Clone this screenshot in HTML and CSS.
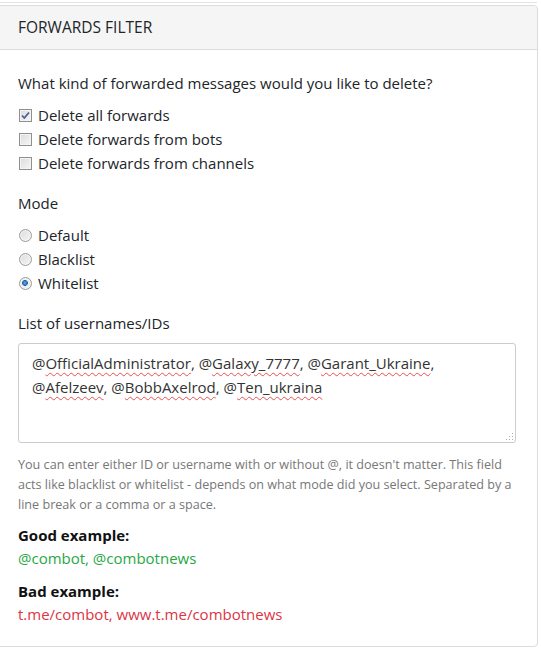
FILE: index.html
```html
<!DOCTYPE html>
<html lang="en">
<head>
  <meta charset="UTF-8" />
  <title>Forwards filter</title>
  <link rel="stylesheet" href="styles.css">
</head>
<body>
  <div class="prev-card"></div>

  <div class="card">
    <div class="card-header">Forwards filter</div>
    <div class="card-body">

      <div class="group">
        <p class="label">What kind of forwarded messages would you like to delete?</p>
        <label class="check"><input type="checkbox" checked> Delete all forwards</label>
        <label class="check"><input type="checkbox"> Delete forwards from bots</label>
        <label class="check"><input type="checkbox"> Delete forwards from channels</label>
      </div>

      <div class="group">
        <p class="label">Mode</p>
        <label class="check"><input type="radio" name="mode"> Default</label>
        <label class="check"><input type="radio" name="mode"> Blacklist</label>
        <label class="check"><input type="radio" name="mode" checked> Whitelist</label>
      </div>

      <div class="group group-list">
        <p class="label">List of usernames/IDs</p>
        <div class="textarea">@<span class="typo">OfficialAdministrator</span>, @<span class="typo">Galaxy_7777</span>, @<span class="typo">Garant_Ukraine</span>, @<span class="typo">Afelzeev</span>, @<span class="typo">BobbAxelrod</span>, @<span class="typo">Ten_ukraina</span><span class="grip"></span></div>
        <p class="help">You can enter either ID or username with or without @, it doesn't matter. This field acts like blacklist or whitelist - depends on what mode did you select. Separated by a line break or a comma or a space.</p>
      </div>

      <div class="example">
        <b>Good example:</b>
        <div class="good">@combot, @combotnews</div>
      </div>
      <div class="example">
        <b>Bad example:</b>
        <div class="bad">t.me/combot, www.t.me/combotnews</div>
      </div>

    </div>
  </div>
</body>
</html>
```

FILE: styles.css
```css
body {
  margin: 0;
  font-family: "Open Sans", sans-serif;
  font-size: 14px;
  color: #212529;
  background: #fff;
  overflow: hidden;
}

/* bottom edge of the card above, cut by the window */
.prev-card {
  height: 2px;
  margin: 0 4px 2px -4px;
  border-bottom: 1px solid #e3e3e3;
}

.card {
  box-sizing: border-box;
  margin-left: -4px;
  width: 542px;
  border: 1px solid #dcdcdc;
  border-radius: 4px;
  background: #fff;
}

.card-header {
  height: 43px;
  line-height: 43px;
  padding-left: 21px;
  background: #f5f5f5;
  border-bottom: 1px solid #dcdcdc;
  border-radius: 4px 4px 0 0;
  text-transform: uppercase;
  font-size: 15.5px;
}

.card-body {
  padding: 21px 21px 20px;
}

.group {
  margin-bottom: 16px;
}

.group-list {
  margin-bottom: 0;
}

.label {
  margin: 0 0 8px;
  font-size: 15px;
  line-height: 24px;
}

.check {
  display: flex;
  align-items: center;
  gap: 6px;
  font-size: 15px;
  line-height: 24px;
}

/* old windows style boxes */
.check input {
  appearance: none;
  flex: none;
  margin: 0 0 0 1px;
  width: 13px;
  height: 13px;
  border: 1px solid #8f8f8f;
  background: linear-gradient(135deg, #dcdcdc, #f6f6f6);
  box-shadow: inset 0 0 0 1px #f4f4f4;
}

.check input[type="checkbox"]:checked {
  background:
    url("data:image/svg+xml,%3Csvg xmlns='http://www.w3.org/2000/svg' viewBox='0 0 11 11'%3E%3Cpath d='M2 5.5l2.3 2.5L9 2.5' fill='none' stroke='%234a5f97' stroke-width='1.8'/%3E%3C/svg%3E") center / 11px 11px no-repeat,
    linear-gradient(135deg, #dcdcdc, #f6f6f6);
}

.check input[type="radio"] {
  border-radius: 50%;
  border-color: #9a9a9a;
}

.check input[type="radio"]:checked {
  background: radial-gradient(circle at 45% 45%, #5fb1f0 0, #1e62a8 2.6px, #f0f0f0 3.2px, #e0e0e0 100%);
}

.textarea {
  position: relative;
  height: 100px;
  box-sizing: border-box;
  margin-top: 7px;
  padding: 7px 13px;
  border: 1px solid #ccc;
  border-radius: 3px;
  font-size: 15px;
  line-height: 24px;
  color: #333;
}

.typo {
  text-decoration: underline wavy #e85050;
  text-decoration-thickness: 1px;
  text-underline-offset: 3px;
}

/* resize handle dots */
.grip {
  position: absolute;
  right: 2px;
  bottom: 2px;
  width: 8px;
  height: 8px;
  background: radial-gradient(circle, #aaa 0.8px, transparent 1px) 0 0 / 3px 3px;
  clip-path: polygon(100% 0, 100% 100%, 0 100%);
}

.help {
  margin: 12px 0 0;
  font-size: 12.6px;
  line-height: 20px;
  color: #777;
}

.example {
  margin-top: 9px;
  font-size: 15px;
  line-height: 23px;
}

.example + .example {
  margin-top: 10px;
}

.example b {
  font-weight: 700;
  color: #111;
}

.good {
  color: #28a745;
}

.bad {
  color: #dc3545;
}
```
